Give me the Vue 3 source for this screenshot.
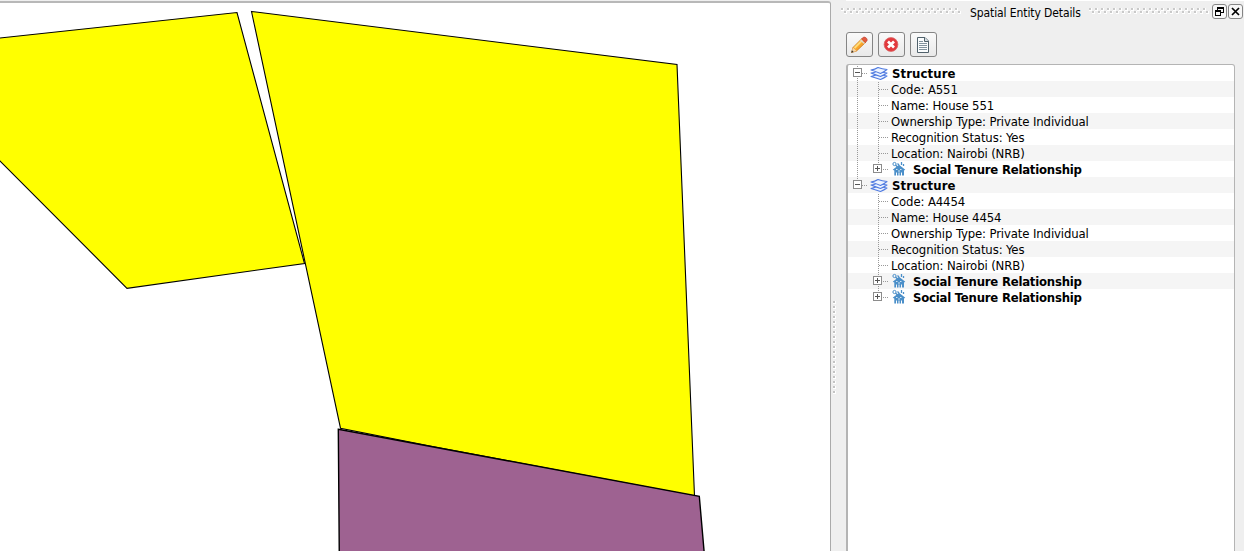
<script setup>
const details = (code) => [
  { kind: 'leaf', text: `Code: A${code}` },
  { kind: 'leaf', text: `Name: House ${code}` },
  { kind: 'leaf', text: 'Ownership Type: Private Individual' },
  { kind: 'leaf', text: 'Recognition Status: Yes' },
  { kind: 'leaf', text: 'Location: Nairobi (NRB)' },
]
const rows = [
  { kind: 'root', text: 'Structure', outer: 'full' },
  ...details('551').map((r) => ({ ...r, outer: 'full' })),
  { kind: 'str', text: 'Social Tenure Relationship', outer: 'full', last: true },
  { kind: 'root', text: 'Structure', outer: 'top' },
  ...details('4454'),
  { kind: 'str', text: 'Social Tenure Relationship' },
  { kind: 'str', text: 'Social Tenure Relationship', last: true },
]
</script>

<template>
  <div class="window">
    <main class="canvas">
      <svg width="830" height="548" viewBox="0 3 830 548">
        <g stroke="#000" stroke-width="1.1">
          <path d="M-5 38.5L237 12.5L304.500 263.500L127 288.300L-5 156Z" fill="#ff0" />
          <path d="M251.500 11.500L677 64.500L694.500 496L430 446L340.500 428.200Z" fill="#ff0" />
          <path d="M338.300 429.300L699.300 496.300L704.500 556H339.300Z" fill="#9e6291" stroke-width="1.4" />
        </g>
      </svg>
    </main>
    <div class="splitter"><i></i></div>
    <aside class="dock">
      <header class="title">
        <span class="grip"></span>
        <h1>Spatial Entity Details</h1>
        <span class="grip right"></span>
        <button class="tiny" aria-label="Float">
          <svg width="13" height="13" viewBox="0 0 13 13" fill="none" stroke="#000" shape-rendering="crispEdges">
            <path d="M4 3.500h7M4 2.500h7M4.500 3v3M10.500 3v5M8 7.500h3M2 5.500h6M2 6.500h6M2.500 6v5M7.500 6v5M2 10.500h6" />
          </svg>
        </button>
        <button class="tiny" aria-label="Close">
          <svg width="13" height="13" viewBox="0 0 13 13" fill="none" stroke="#000" stroke-width="1.7">
            <path d="M3 3L10 10M10 3L3 10" />
          </svg>
        </button>
      </header>
      <div class="tools">
        <button aria-label="Edit">
          <svg width="18" height="18" viewBox="0 0 18 18">
            <path d="M1.500 16.500L3 11.500L12 2.500L16 6L6.500 15Z" fill="#f9a52b" stroke="#c87413" stroke-width=".8" />
            <path d="M4.500 12L12.500 4" stroke="#ffdc78" stroke-width="1.900" />
            <path d="M1.500 16.500L3 11.500L6.500 15Z" fill="#f5d6aa" />
            <path d="M1.200 16.800L2 14.300L3.700 16Z" fill="#333" />
            <path d="M11.500 3L13.300 1.200Q14.800 .6 16.500 2.200Q17.600 3.700 17 4.800L15.300 6.600Z" fill="#e35b43" stroke="#b83a29" stroke-width=".6" />
            <path d="M10.600 3.900L14.500 7.500" stroke="#d9d9d9" stroke-width="1.300" />
          </svg>
        </button>
        <button aria-label="Delete">
          <svg width="18" height="18" viewBox="0 0 18 18">
            <circle cx="9" cy="8.500" r="6.900" fill="#e2393d" stroke="#d96767" stroke-width=".8" />
            <path d="M6 5.500L12 11.500M12 5.500L6 11.500" stroke="#fff" stroke-width="2.700" />
          </svg>
        </button>
        <button aria-label="View document">
          <svg width="18" height="18" viewBox="0 0 18 18" fill="none" stroke="#50616b">
            <path d="M2.500 1.500H10L13.500 5V16.500H2.500Z" fill="#fafcfd" />
            <path d="M9.500 1.500V5.500H13.500" fill="#d8e0e4" />
            <path d="M4 5.500h4M4 7.500h8M4 9.500h8M4 11.500h8M4 13.500h8" stroke="#82939e" />
          </svg>
        </button>
      </div>
      <section class="tree">
        <div v-for="(r, i) in rows" :key="i" class="row" :class="r.kind">
          <svg class="gutter" height="16" fill="none" stroke="#999" shape-rendering="crispEdges">
            <g stroke-dasharray="1 1">
              <path v-if="r.outer" :d="r.outer === 'full' ? 'M10.500 1V16' : 'M10.500 1V8'" />
              <path v-if="r.kind === 'root'" d="M15 8.500H21" />
              <path v-else :d="r.last ? 'M31.500 1V8M32 8.500H42' : 'M31.500 1V16M32 8.500H42'" />
            </g>
            <g v-if="r.kind !== 'leaf'" :transform="r.kind === 'root' ? 'translate(6 3)' : 'translate(26 3)'">
              <rect x=".5" y=".5" width="8" height="8" fill="#fff" stroke="#8c8c8c" />
              <path d="M2 4.500H7" stroke="#555" />
              <path v-if="r.kind === 'str'" d="M4.500 2V7" stroke="#555" />
            </g>
          </svg>
          <svg v-if="r.kind === 'root'" class="icon" width="18" height="16" viewBox="0 0 18 16" fill="#edf4ff" stroke="#507be0" stroke-width="1.100" stroke-linejoin="round">
            <path d="M1 11.500Q4 11 7.500 9Q12 10.500 17 11Q14 13 10.500 14.500Q6 13 1 11.500Z" />
            <path d="M1 8Q4 8 7.500 6Q12 7.500 17 8Q14 10 10.500 11.500Q6 10 1 8Z" />
            <path d="M1 5Q5 4.500 8 2.500Q12 4 17 4.500Q14 7 10.500 8.500Q6 6.500 1 5Z" />
          </svg>
          <svg v-if="r.kind === 'str'" class="icon" width="14" height="16" viewBox="0 0 14 16" fill="none" stroke="#4b8fc9">
            <circle cx="2.500" cy="3" r="1.600" />
            <path d="M3.500 4L7 7.500M5.500 2.500L7 4M9.500 1V4M11.500 3V5" stroke-width="1.300" />
            <path d="M.7 8.800L7 3.800L13.300 8.800L12 9.500V14.500H10V11.500H9V14.500H7.500V11.500H6.500V14.500H5V11.500H4V14.500H2.300V9.500Z" fill="#4b8fc9" stroke="none" />
            <path d="M4 8.500H5.500M8 8.500H9.500M6 10H8" stroke="#d1e4f3" />
          </svg>
          <span class="label">{{ r.text }}</span>
        </div>
      </section>
    </aside>
  </div>
</template>

<style>
body { background: #efefef; overflow: hidden; }
</style>
<style scoped>
* { box-sizing: border-box; }
.window { display: flex; width: 1244px; height: 551px; overflow: hidden; background: #efefef; color: #000; font: 12px "DejaVu Sans Condensed", "DejaVu Sans", sans-serif; font-stretch: condensed; }
.canvas { width: 831px; height: 551px; background: #fff; border-top: 2px solid #b8b8b8; border-right: 1px solid #aaa; border-top-right-radius: 3px; margin-top: 1px; }
.canvas svg { display: block; }
.splitter { width: 15px; padding: 301px 0 0 2px; }
.splitter i { display: block; width: 3px; height: 93px; background: conic-gradient(from 270deg at 2px 2px, #c4c4c4 25%, #fff 0) 0 0 / 3px 5px; -webkit-mask: repeating-linear-gradient(#000 0 3px, transparent 3px 5px); }
.dock { width: 398px; display: flex; flex-direction: column; border-top: 1px solid #fff; }
.title { display: flex; align-items: flex-start; height: 25px; flex: none; margin-top: 3px; }
.grip {
  width: 120px; height: 6px; flex: none; margin: 4px 9px 0 -5px;
  background: conic-gradient(from 270deg at 2px 2px, #c9c9c9 25%, #fff 0) 0 0 / 3px 3px;
  -webkit-mask: conic-gradient(from 270deg at 3px 3px, #000 25%, transparent 0 50%, #000 0 75%, transparent 0) 0 0 / 6px 6px;
}
.grip.right { margin: 4px 3px 0 8px; }
h1 { width: 111px; flex: none; margin: 0; font: inherit; font-stretch: condensed; line-height: 18px; white-space: nowrap; letter-spacing: -.1px; }
.tiny { width: 15px; height: 15px; padding: 0; margin: 0 1px 0 0; border: 1px solid #858585; border-radius: 3px; background: #f7f7f7; flex: none; }
.tiny svg { display: block; }
.tools { display: flex; align-items: flex-end; gap: 5px; height: 28px; flex: none; }
.tools button { display: grid; place-items: center; width: 27px; height: 25px; padding: 0; border: 1px solid #858585; border-radius: 3px; background: linear-gradient(#fafafa, #e9e9e9); }
.tools svg { display: block; }
.tools button:nth-child(-n+2) svg { transform: translateX(-1px); }
.tree { width: 389px; height: 500px; margin-top: 7px; border: 1px solid #b4b4b4; border-left-width: 2px; border-radius: 3px; background: #fff; flex: none; }
.row { display: flex; align-items: center; height: 16px; white-space: nowrap; }
.row:nth-child(even) { background: #f5f5f5; }
.gutter { display: block; width: 44px; flex: none; margin-left: -1px; }
.root .gutter { width: 23px; }
.str .gutter { width: 45px; }
.icon { flex: none; }
.label { font-size: 13px; line-height: 16px; padding-top: 2px; letter-spacing: -.12px; }
.root .label, .str .label { font-weight: bold; }
.str .label { margin-left: 7px; letter-spacing: -.22px; }
.root .label { margin-left: 4px; letter-spacing: .1px; }
</style>
